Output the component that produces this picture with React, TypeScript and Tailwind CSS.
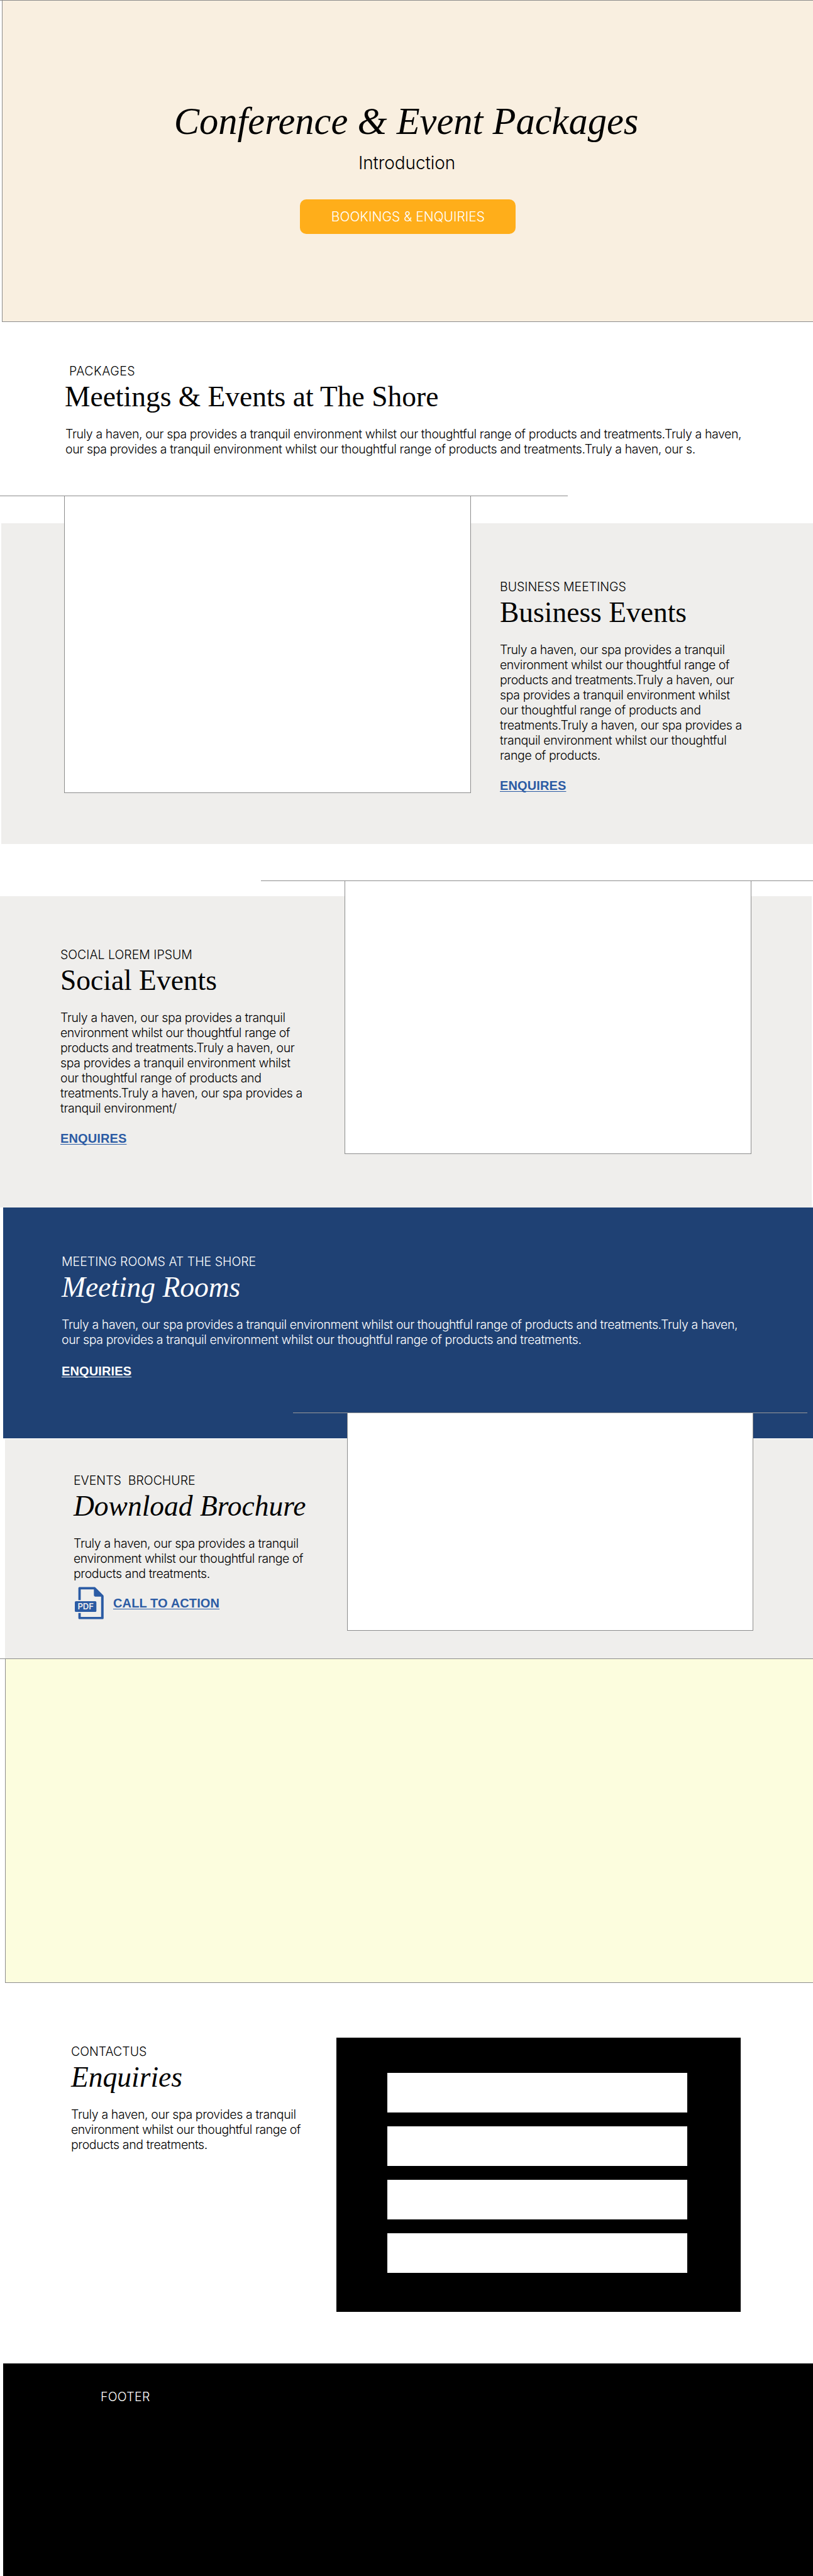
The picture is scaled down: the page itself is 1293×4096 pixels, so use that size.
import type { ReactNode } from "react";

const SENTENCE =
  "Truly a haven, our spa provides a tranquil environment whilst our thoughtful range of products and treatments.";

function Eyebrow({ children, className = "" }: { children: ReactNode; className?: string }) {
  return <p className={`text-[19.5px] leading-6 font-light whitespace-pre ${className}`}>{children}</p>;
}

function Heading({ children, className = "" }: { children: ReactNode; className?: string }) {
  return (
    <h2 className={`mt-[5px] font-['Liberation_Serif',serif] text-[45.5px] leading-[48px] font-normal whitespace-nowrap ${className}`}>
      {children}
    </h2>
  );
}

function Copy({ lines, narrow = false }: { lines: string[]; narrow?: boolean }) {
  return (
    <p className="mt-[23px] text-[19.5px] leading-6 font-light tracking-[-0.387px]">
      {lines.map((line, i) => (
        <span key={line} className={`block whitespace-nowrap ${narrow && i === 1 ? "tracking-[-0.48px]" : ""}`}>
          {line}
        </span>
      ))}
    </p>
  );
}

function TextLink({ children, className = "" }: { children: ReactNode; className?: string }) {
  return (
    <a
      href="#"
      className={`block w-fit font-['Liberation_Sans',sans-serif] text-[20px] leading-6 font-bold tracking-[0.12px] whitespace-nowrap underline decoration-1 underline-offset-2 [text-decoration-skip-ink:none] ${className}`}
    >
      {children}
    </a>
  );
}

function PdfIcon() {
  return (
    <svg viewBox="146 113 220 247" className="h-[52px] w-[46px] text-[#2b5ba4]" aria-hidden="true">
      <path
        fill="currentColor"
        d="M173 214V122a8 8 0 0 1 8-8H296a8 8 0 0 1 6 2.500L362 177a9 9 0 0 1 3 7V351a8 8 0 0 1-8 8H181a8 8 0 0 1-8-8V312H191V342H346V187H301a10 10 0 0 1-10-10V132H191V214Z"
      />
      <rect x="146" y="222" width="164" height="82" rx="9" fill="currentColor" />
      <text
        x="167"
        y="286"
        fill="#efeeec"
        fontFamily="Inter, sans-serif"
        fontSize="63"
        fontWeight="600"
        textLength="122"
        lengthAdjust="spacing"
      >
        PDF
      </text>
    </svg>
  );
}

export default function App() {
  return (
    <div className="h-[4096px] w-full overflow-hidden bg-white font-['Inter',sans-serif] text-black">
      {/* Hero */}
      <header className="h-[513px] border-t border-[#8c8c8c]">
        <div className="ml-[3px] flex h-[511px] flex-col items-center border-b border-l border-[#8c8c8c] bg-[#f9efe0] pt-[156px]">
          <h1 className="-ml-[5px] font-['Liberation_Serif',serif] text-[60.5px] leading-[72px] font-normal whitespace-nowrap italic">
            Conference &amp; Event Packages
          </h1>
          <p className="-ml-[3px] mt-[12.500px] text-[28px] leading-[34px] font-light tracking-[-0.1px]">Introduction</p>
          <a
            href="#"
            className="mt-[41px] flex h-[55px] w-[343px] items-center justify-center rounded-[10px] bg-[#ffae1a] pt-px pl-px text-[21px] font-light whitespace-nowrap text-white"
          >
            BOOKINGS &amp; ENQUIRIES
          </a>
        </div>
      </header>

      {/* Packages */}
      <section className="h-[319px] pt-[65px] pl-[104px]">
        <Eyebrow className="pl-[6px] tracking-[0.5px]">PACKAGES</Eyebrow>
        <Heading className="-ml-px">Meetings &amp; Events at The Shore</Heading>
        <Copy
          lines={[
            `${SENTENCE}Truly a haven,`,
            "our spa provides a tranquil environment whilst our thoughtful range of products and treatments.Truly a haven, our s.",
          ]}
        />
      </section>

      {/* Business events */}
      <section className="relative ml-[2px] flex h-[510px] bg-[#efeeec]">
        <div className="absolute -top-[44px] -left-[2px] h-px w-[903px] bg-[#8c8c8c]" />
        <div className="-mt-[44px] ml-[100px] h-[473px] w-[647px] shrink-0 border border-[#8c8c8c] bg-white" />
        <div className="ml-[46px] pt-[89px]">
          <Eyebrow>BUSINESS MEETINGS</Eyebrow>
          <Heading>Business Events</Heading>
          <Copy
            narrow
            lines={[
              "Truly a haven, our spa provides a tranquil",
              "environment whilst our thoughtful range of",
              "products and treatments.Truly a haven, our",
              "spa provides a tranquil environment whilst",
              "our thoughtful range of products and",
              "treatments.Truly a haven, our spa provides a",
              "tranquil environment whilst our thoughtful",
              "range of products.",
            ]}
          />
          <TextLink className="mt-6 text-[#2b5ba4]">ENQUIRES</TextLink>
        </div>
      </section>

      {/* Social events */}
      <section className="relative mt-[83px] mr-[2px] flex h-[495px] bg-[#efeeec]">
        <div className="absolute -top-[25px] -right-[2px] left-[415px] h-px bg-[#8c8c8c]" />
        <div className="w-[548px] pt-[81px] pl-[96px]">
          <Eyebrow>SOCIAL LOREM IPSUM</Eyebrow>
          <Heading>Social Events</Heading>
          <Copy
            narrow
            lines={[
              "Truly a haven, our spa provides a tranquil",
              "environment whilst our thoughtful range of",
              "products and treatments.Truly a haven, our",
              "spa provides a tranquil environment whilst",
              "our thoughtful range of products and",
              "treatments.Truly a haven, our spa provides a",
              "tranquil environment/",
            ]}
          />
          <TextLink className="mt-6 text-[#2b5ba4]">ENQUIRES</TextLink>
        </div>
        <div className="-mt-[25px] h-[435px] w-[647px] border border-[#8c8c8c] bg-white" />
      </section>

      {/* Meeting rooms */}
      <section className="ml-[5px] h-[367px] bg-[#1f4174] pt-[74px] pl-[93px] text-white">
        <Eyebrow>MEETING ROOMS AT THE SHORE</Eyebrow>
        <Heading className="italic">Meeting Rooms</Heading>
        <Copy
          lines={[
            `${SENTENCE}Truly a haven,`,
            "our spa provides a tranquil environment whilst our thoughtful range of products and treatments.",
          ]}
        />
        <TextLink className="mt-[26px]">ENQUIRIES</TextLink>
      </section>

      {/* Brochure */}
      <section className="relative mt-px ml-[8px] flex h-[349px] bg-[#efeeec]">
        <div className="absolute -top-[42px] right-[9px] left-[458px] h-px bg-[#999]" />
        <div className="w-[544px] pt-[54px] pl-[109px]">
          <Eyebrow>{"EVENTS  BROCHURE"}</Eyebrow>
          <Heading className="italic">Download Brochure</Heading>
          <Copy
            narrow
            lines={[
              "Truly a haven, our spa provides a tranquil",
              "environment whilst our thoughtful range of",
              "products and treatments.",
            ]}
          />
          <div className="mt-[9px] ml-[2px] flex gap-[15px]">
            <PdfIcon />
            <TextLink className="mt-[14px] text-[#2b5ba4]">CALL TO ACTION</TextLink>
          </div>
        </div>
        <div className="-mt-[42px] h-[347px] w-[646px] border border-[#8c8c8c] bg-white" />
      </section>

      {/* Banner */}
      <section className="h-[516px] border-t border-[#8c8c8c]">
        <div className="ml-[8px] h-[515px] border-b border-l border-[#8c8c8c] bg-[#fcfdde]" />
      </section>

      {/* Contact */}
      <section className="flex h-[605px] pl-[113px]">
        <div className="w-[422px] pt-[97px]">
          <Eyebrow>CONTACTUS</Eyebrow>
          <Heading className="italic">Enquiries</Heading>
          <Copy
            narrow
            lines={[
              "Truly a haven, our spa provides a tranquil",
              "environment whilst our thoughtful range of",
              "products and treatments.",
            ]}
          />
        </div>
        <form className="mt-[87px] flex h-[436px] w-[643px] flex-col gap-[22px] bg-black pt-[55.500px] pr-[85px] pl-[81px]">
          {[0, 1, 2, 3].map((field) => (
            <div key={field} className="h-[63px] bg-white" />
          ))}
        </form>
      </section>

      <footer className="ml-[5px] h-[338px] bg-black pt-[41px] pl-[155px] text-white">
        <Eyebrow className="tracking-[0.3px]">FOOTER</Eyebrow>
      </footer>
    </div>
  );
}
